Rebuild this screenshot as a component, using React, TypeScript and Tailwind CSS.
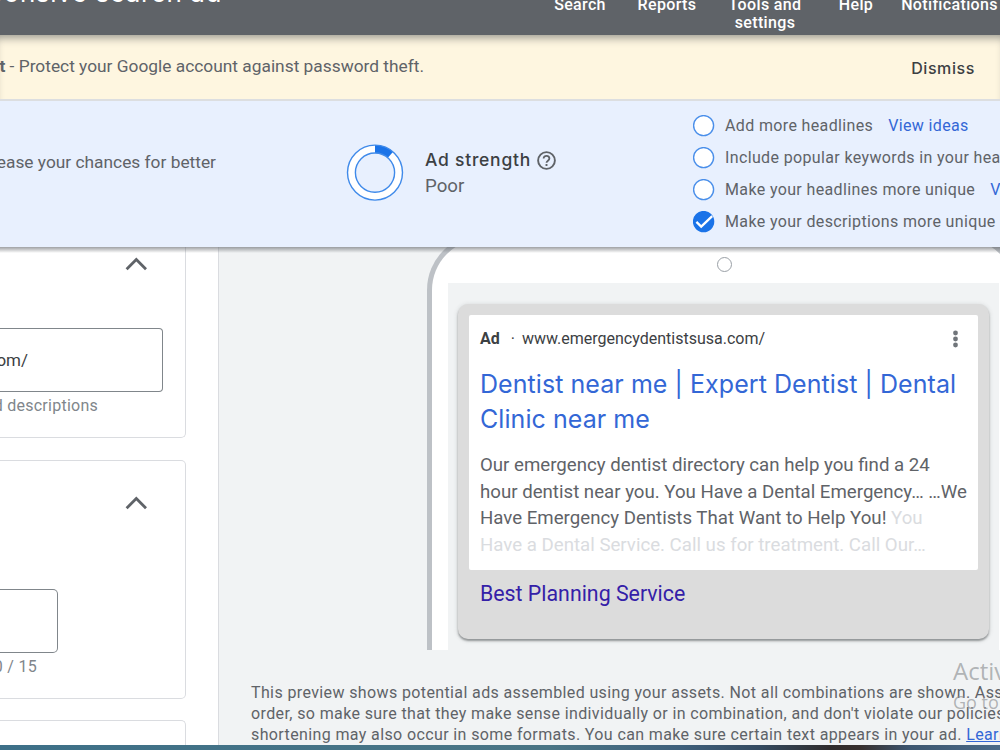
import React from 'react';

const navItems = [
  { label: 'Search', width: 'w-[84px]' },
  { label: 'Reports', width: 'w-[90px]' },
  { label: 'Tools and settings', width: 'w-[106px]' },
  { label: 'Help', width: 'w-[76px]' },
  { label: 'Notifications', width: 'w-[111px]' },
];

const suggestions = [
  { label: 'Add more headlines', done: false, ideas: true },
  { label: 'Include popular keywords in your headlines', done: false, ideas: true },
  { label: 'Make your headlines more unique', done: false, ideas: true },
  { label: 'Make your descriptions more unique', done: true, ideas: false },
];

const Chevron: React.FC = () => (
  <svg width="22" height="14" viewBox="0 0 22 14" fill="none" className="block">
    <path d="M1.6 12.2 11.3 2.5l9.7 9.7" stroke="#5f6368" strokeWidth="2.8" />
  </svg>
);

const StatusCircle: React.FC<{ done: boolean }> = ({ done }) => (
  <svg width="22" height="22" viewBox="0.4 0.4 22 22" className="shrink-0">
    <circle cx="11" cy="11" r="10" fill={done ? '#1a73e8' : '#fff'} stroke={done ? '#1a73e8' : '#4a8fea'} strokeWidth="1.4" />
    {done && <path d="M3.8 11.3 8.6 16 19.6 5.6" fill="none" stroke="#fff" strokeWidth="2.3" />}
  </svg>
);

const Header: React.FC = () => (
  <header className="relative z-10 flex h-[35px] shrink-0 items-start overflow-hidden bg-[#5f6368] text-white">
    <div className="-mt-[23px] flex w-[222px] shrink-0 justify-end whitespace-nowrap font-[Inter] text-[26px] leading-[32px] tracking-[0.6px]">
      <span>Responsive search ad</span>
    </div>
    <nav className="-mt-[4px] ml-[316px] flex shrink-0 text-center text-[16px] font-medium leading-[18px] tracking-[0.35px]">
      {navItems.map(item => (
        <div key={item.label} className={`${item.width} shrink-0 px-1`}>{item.label}</div>
      ))}
    </nav>
  </header>
);

const AdStrength: React.FC = () => (
  <section className="relative z-10 flex h-[148px] shrink-0 overflow-hidden border-t-2 border-[#dcdee0] bg-[#e8f0fe] text-[#5f6368]">
    <div className="flex w-[216px] shrink-0 justify-end whitespace-nowrap pt-[51px] text-[17.33px] leading-[20px]">
      <span>Complete your ad to increase your chances for better</span>
    </div>
    <svg width="58" height="58" viewBox="0 0.4 58 58" className="ml-[130px] mt-[43px] shrink-0">
      <circle cx="29" cy="29" r="23.6" fill="none" stroke="#fff" strokeWidth="8" />
      <path d="M29 5.4A23.6 23.6 0 0 1 44.5 11.2" fill="none" stroke="#1a73e8" strokeWidth="8" />
      <circle cx="29" cy="29" r="27.5" fill="none" stroke="#3f8aea" strokeWidth="1.4" />
      <circle cx="29" cy="29" r="19.6" fill="none" stroke="#3f8aea" strokeWidth="1.4" />
    </svg>
    <div className="ml-[21px] w-[268px] shrink-0 pt-[46px]">
      <div className="flex items-center gap-[6px] font-[Inter] text-[17.5px] font-medium leading-[26px] tracking-[0.75px] text-[#3c4043]">
        Ad strength
        <svg width="19" height="19" viewBox="0 0 19 19" fill="none" stroke="#5f6368">
          <circle cx="9.5" cy="9.5" r="8.4" strokeWidth="1.9" />
          <path d="M6.6 7.6c0-3.8 5.8-3.7 5.8 0 0 2-2.9 2.2-2.9 4.2" strokeWidth="1.8" />
          <path d="M9.5 13v2" strokeWidth="1.9" />
        </svg>
      </div>
      <div className="text-[18.67px] leading-[26px]">Poor</div>
    </div>
    <ul className="flex shrink-0 flex-col pt-[9px] text-[16px] tracking-[0.36px]">
      {suggestions.map(s => (
        <li key={s.label} className="flex h-8 items-center whitespace-nowrap">
          <StatusCircle done={s.done} />
          <span className="ml-[10px]">{s.label}</span>
          {s.ideas && <a className="ml-[15px] text-[#3367d6]">View ideas</a>}
        </li>
      ))}
    </ul>
  </section>
);

const AdForm: React.FC = () => (
  <div className="flex w-[219px] shrink-0 flex-col border-r border-[#dadce0] bg-white text-[16px] leading-5 text-[#80868b]">
    <div className="mr-8 flex h-[191px] shrink-0 flex-col rounded-br-[5px] border-b border-r border-[#dadce0]">
      <div className="ml-[125px] mt-[10px]"><Chevron /></div>
      <div className="mt-[57px] flex h-16 w-[163px] items-center justify-end whitespace-nowrap rounded-r-[4px] border border-l-0 border-[#80868b] pr-[134px] text-[17px] text-[#3c4043]">
        <span>emergencydentistsusa.com/</span>
      </div>
      <div className="mt-[4px] flex w-[98px] justify-end whitespace-nowrap tracking-[0.25px]">
        <span>Used to suggest headlines and descriptions</span>
      </div>
    </div>
    <div className="mr-8 mt-[22px] flex h-[239px] shrink-0 flex-col rounded-r-[5px] border-y border-r border-[#dadce0]">
      <div className="ml-[125px] mt-[35px]"><Chevron /></div>
      <div className="mt-[79px] h-16 w-[58px] rounded-r-[5px] border border-l-0 border-[#80868b]" />
      <div className="mt-[4px] flex w-[37px] justify-end whitespace-nowrap tracking-[0.3px]">
        <span>0 / 15</span>
      </div>
    </div>
    <div className="mr-8 mt-[21px] h-16 shrink-0 rounded-tr-[5px] border-r border-t border-[#dadce0]" />
  </div>
);

const PhonePreview: React.FC = () => (
  <div className="-mt-[13px] ml-[208px] h-[416px] w-[593px] shrink-0 rounded-t-[56px] border-x-[5px] border-t-[5px] border-[#bdc1c6] bg-white px-4 pt-[18px]">
    <div className="ml-[269px] size-[15px] rounded-full border-[1.5px] border-[#9aa0a6]" />
    <div className="mt-[11px] h-[367px] bg-[#f1f3f4] px-[10px] pt-[21px]">
      <div className="h-[335px] rounded-[10px] bg-[#dcdcdc] p-[11px] shadow-[0_2px_2px_rgba(60,64,67,0.45),0_1px_5px_rgba(60,64,67,0.2)]">
        <div className="h-[255px] whitespace-nowrap rounded-[2px] bg-white pl-[11px] pt-[12px]">
          <div className="flex h-6 items-center text-[16px] text-[#3c4043]">
            <span className="font-bold">Ad</span>
            <span className="ml-[11px] mr-[7px]">·</span>
            <span>www.emergencydentistsusa.com/</span>
            <svg width="6" height="18" viewBox="-0.5 0 6 18" fill="#70757a" className="ml-auto mr-[20px]">
              <circle cx="3" cy="3" r="2.4" />
              <circle cx="3" cy="9" r="2.4" />
              <circle cx="3" cy="15" r="2.4" />
            </svg>
          </div>
          <h2 className="mt-[16px] font-[Inter] text-[25px] leading-[35px] tracking-[0.06px] text-[#3367d6]">
            Dentist near me | Expert Dentist | Dental<br />Clinic near me
          </h2>
          <p className="mt-[15px] text-[18.67px] leading-[26.67px] text-[#5f6368]">
            Our emergency dentist directory can help you find a 24<br />
            hour dentist near you. You Have a Dental Emergency… …We<br />
            Have Emergency Dentists That Want to Help You! <span className="text-[#dadce0]">You</span><br />
            <span className="text-[#dadce0]">Have a Dental Service. Call us for treatment. Call Our…</span>
          </p>
        </div>
        <div className="pl-[11px] pt-[9.5px] text-[21.33px] leading-[28px] text-[#3420a8]">Best Planning Service</div>
      </div>
    </div>
  </div>
);

const App: React.FC = () => {
  return (
    <div className="relative flex h-[750px] w-[1000px] flex-col overflow-hidden bg-white font-[Roboto,sans-serif]">
      <Header />
      <div className="flex h-[64px] shrink-0 items-center justify-between bg-[#fef6e0] pr-[25px] text-[17.33px] text-[#5f6368] shadow-[inset_0_8px_8px_-5px_rgba(60,64,67,0.5)]">
        <div className="flex w-[424px] justify-end whitespace-nowrap">
          <span><b className="font-bold">Security alert</b> - Protect your Google account against password theft.</span>
        </div>
        <button className="pt-[2px] font-[Inter] text-[16px] font-medium tracking-[0.6px] text-[#3c4043]">Dismiss</button>
      </div>
      <AdStrength />
      <main className="relative flex h-[498px] shrink-0 overflow-hidden bg-[#f1f3f4]">
        <AdForm />
        <div className="flex shrink-0 flex-col">
          <PhonePreview />
          <p className="ml-8 mt-[31.5px] whitespace-nowrap text-[16px] leading-[21.33px] tracking-[0.38px] text-[#5f6368]">
            This preview shows potential ads assembled using your assets. Not all combinations are shown. Assets can be shown in any<br />
            order, so make sure that they make sense individually or in combination, and don't violate our policies or local law. Some<br />
            shortening may also occur in some formats. You can make sure certain text appears in your ad. <a className="text-[#3367d6] underline">Learn more</a>
          </p>
        </div>
        <div className="pointer-events-none absolute inset-x-0 top-0 h-[6px] bg-gradient-to-b from-[#5f6368]/60 to-transparent" />
      </main>
      <div className="h-[5px] shrink-0 bg-[linear-gradient(90deg,#3d7088_0%,#4a7585_55%,#3f607c_68%,#344a60_76%,#302c2c_83%,#38302e_86%,#3d5670_91%,#4a6a88_100%)]" />
      <div className="absolute left-[953px] top-[655px] whitespace-nowrap font-['Open_Sans'] text-[#8c8f92]/65">
        <div className="text-[24px] leading-[32px]">Activate Windows</div>
        <div className="text-[18px] leading-[30px]">Go to Settings to activate Windows.</div>
      </div>
    </div>
  );
};

export default App;
